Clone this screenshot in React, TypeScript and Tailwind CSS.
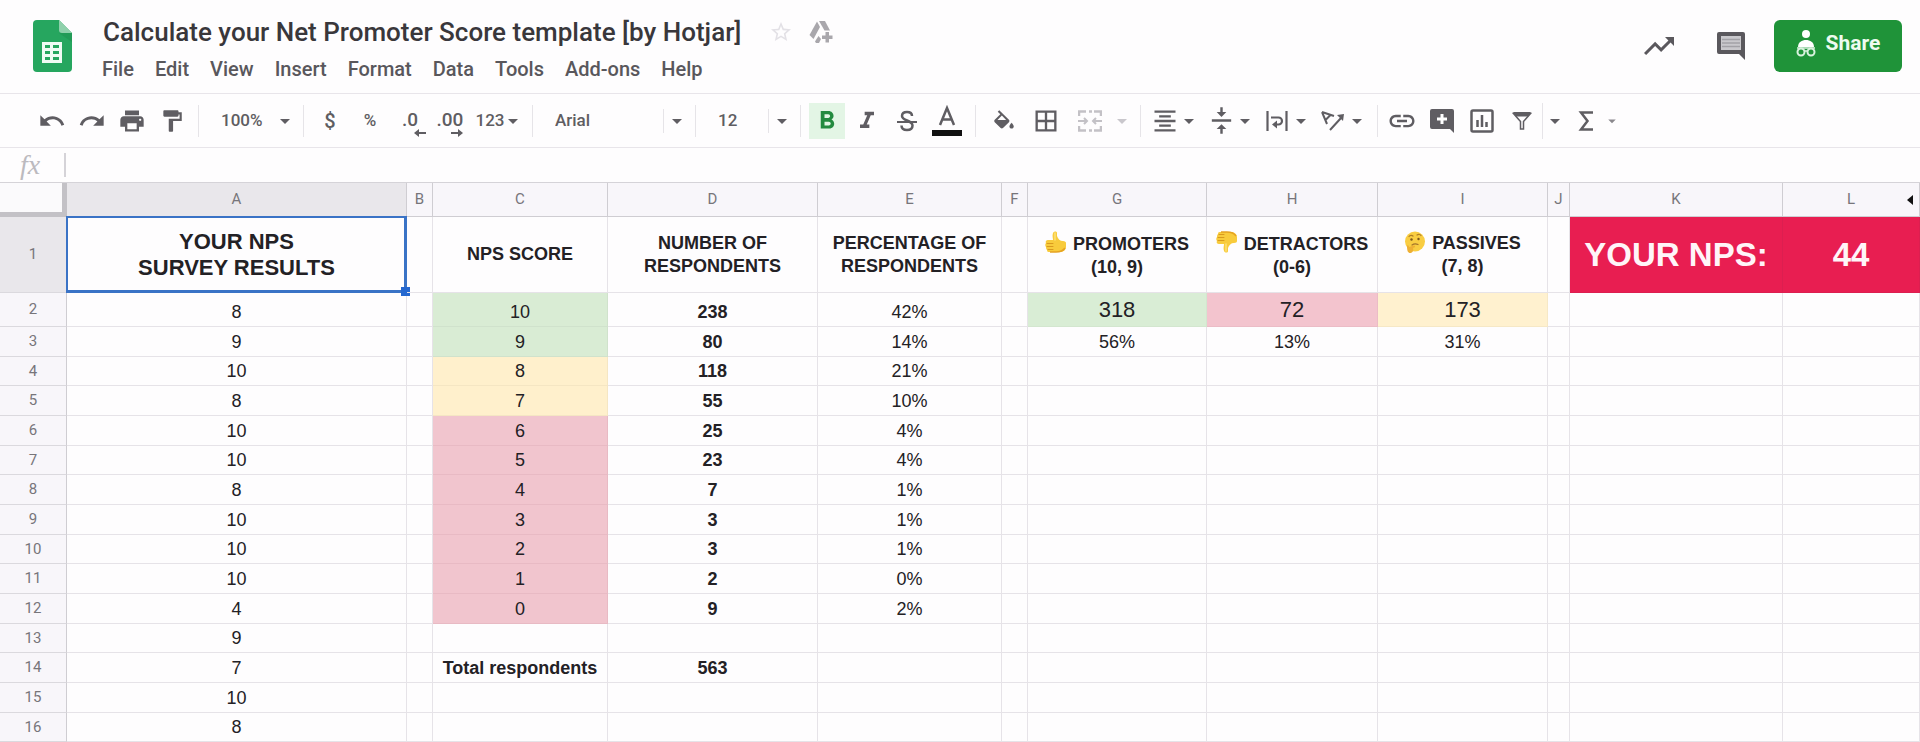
import { useState } from 'react';
import type { ReactNode } from 'react';
import clsx from 'clsx';
import {
  MdArrowDropDown,
  MdBorderAll,
  MdFormatAlignCenter,
  MdFormatBold,
  MdFormatItalic,
  MdFormatPaint,
  MdLink,
  MdPrint,
  MdRedo,
  MdStarBorder,
  MdTrendingUp,
  MdUndo,
  MdVerticalAlignCenter,
} from 'react-icons/md';

const menuItems = ['File', 'Edit', 'View', 'Insert', 'Format', 'Data', 'Tools', 'Add-ons', 'Help'];

const columns = [
  { name: 'A', width: 'w-[340px]' },
  { name: 'B', width: 'w-[26px]' },
  { name: 'C', width: 'w-[175px]' },
  { name: 'D', width: 'w-[210px]' },
  { name: 'E', width: 'w-[184px]' },
  { name: 'F', width: 'w-[26px]' },
  { name: 'G', width: 'w-[179px]' },
  { name: 'H', width: 'w-[171px]' },
  { name: 'I', width: 'w-[170px]' },
  { name: 'J', width: 'w-[22px]' },
  { name: 'K', width: 'w-[213px]' },
  { name: 'L', width: 'w-[137px]' },
];

const surveyResults = [8, 9, 10, 8, 10, 10, 8, 10, 10, 10, 4, 9, 7, 10, 8];

const scores = [
  { score: 10, count: 238, share: '42%' },
  { score: 9, count: 80, share: '14%' },
  { score: 8, count: 118, share: '21%' },
  { score: 7, count: 55, share: '10%' },
  { score: 6, count: 25, share: '4%' },
  { score: 5, count: 23, share: '4%' },
  { score: 4, count: 7, share: '1%' },
  { score: 3, count: 3, share: '1%' },
  { score: 2, count: 3, share: '1%' },
  { score: 1, count: 2, share: '0%' },
  { score: 0, count: 9, share: '2%' },
];

const groups: Record<string, { total: number; share: string; color: string }> = {
  G: { total: 318, share: '56%', color: 'bg-[#d9edd5] border-[#d3e6cf]' },
  H: { total: 72, share: '13%', color: 'bg-[#f3c4ce] border-[#ebbcc6]' },
  I: { total: 173, share: '31%', color: 'bg-[#fff1cf] border-[#f6e8c6]' },
};

const scoreColor = (score: number) => {
  if (score >= 9) return 'bg-[#d9ecd4] border-[#d0e2cc]';
  if (score >= 7) return 'bg-[#fff0cc] border-[#f5e6c3]';
  return 'bg-[#f1c5ce] border-[#e8bac4]';
};

const Caret = ({ className }: { className?: string }) => (
  <MdArrowDropDown size={24} className={clsx('-mx-1 shrink-0', className)} />
);

const Divider = ({ className = 'mx-1.5' }: { className?: string }) => (
  <span className={clsx('h-8 w-px shrink-0 bg-[#e6e4e8]', className)} />
);

const Tool = ({ label, className = 'w-10', children }: { label: string; className?: string; children: ReactNode }) => (
  <button type="button" aria-label={label} className={clsx('flex h-9 shrink-0 items-center justify-center', className)}>
    {children}
  </button>
);

const MenuTool = ({ label, children }: { label: string; children: ReactNode }) => (
  <button type="button" aria-label={label} className="flex h-9 w-14 shrink-0 items-center">
    <span className="flex w-8 justify-center">{children}</span>
    <Caret />
  </button>
);

const Picker = ({ label, value, className, split }: { label: string; value: string; className: string; split?: boolean }) => (
  <div className={clsx('relative h-9 shrink-0', className)}>
    <select
      aria-label={label}
      defaultValue={value}
      className="h-full w-full appearance-none bg-transparent pl-4 text-[17px] font-medium outline-none"
    >
      <option>{value}</option>
    </select>
    <span className="pointer-events-none absolute inset-y-0 right-0 flex items-center">
      {split && <span className="mr-px h-6 w-px bg-[#e6e4e8]" />}
      <MdArrowDropDown size={24} />
    </span>
  </div>
);

const SheetsLogo = () => (
  <svg viewBox="0 0 39 52" className="h-[52px] w-[39px] shrink-0" aria-label="Sheets">
    <path d="M4 0h22l13 13v35a4 4 0 0 1-4 4H4a4 4 0 0 1-4-4V4a4 4 0 0 1 4-4z" fill="#26a65f" />
    <path d="M26 0l13 13H29a3 3 0 0 1-3-3z" fill="#8fd0ab" />
    <path d="M26 13h13v9z" fill="#1e8f50" opacity=".5" />
    <path
      fillRule="evenodd"
      fill="#f0fbf4"
      d="M9 22h20v21H9zM12 25v3h5v-3zM20 25v3h6v-3zM12 31v3h5v-3zM20 31v3h6v-3zM12 37v3h5v-3zM20 37v3h6v-3z"
    />
  </svg>
);

const DriveIcon = () => (
  <svg viewBox="0 0 24 24" className="size-6" fill="currentColor">
    <path d="M8 1.500l3 5.500-6.500 12L0.500 15z" />
    <path d="M10 1h6l5 9.500h-5.500z" />
    <path d="M9.500 16l2.500 3-2 4H7l-1-1.500z" />
    <path d="M16.500 12h3.500v3.500h3.500V19H20v3.500h-3.500V19H13v-3.500h3.500z" />
  </svg>
);

const CommentIcon = () => (
  <svg viewBox="0 0 30 30" className="size-[30px]">
    <path d="M3 1h24a2 2 0 0 1 2 2v26l-6-6H3a2 2 0 0 1-2-2V3a2 2 0 0 1 2-2z" fill="#5a585d" />
    <path d="M5 5h20v14H5z" fill="#c9c8cc" />
    <path d="M6 8.500h18M6 12h18M6 15.500h18" stroke="#a2a1a6" strokeWidth="1.500" />
  </svg>
);

const ShareIcon = () => (
  <svg viewBox="0 0 20 28" className="h-7 w-5" fill="none">
    <circle cx="10" cy="4" r="4" fill="#fff" />
    <path d="M2 17c0-5 4-7 8-7s8 2 8 7z" fill="#fff" />
    <circle cx="5" cy="22" r="3.500" stroke="#d9f2de" strokeWidth="2" />
    <circle cx="15" cy="22" r="3.500" stroke="#d9f2de" strokeWidth="2" />
    <path d="M1 18h18M8 21h4" stroke="#d9f2de" strokeWidth="1.500" />
  </svg>
);

const ThumbIcon = ({ down }: { down?: boolean }) => (
  <svg viewBox="0 0 22 22" className={clsx('mr-1.5 inline-block size-[22px] align-[-3px]', down ? 'rotate-180' : '-scale-x-100')}>
    <path
      d="M1 12c0-1 1-2 3-2 3 0 5-2 6-5V2c0-2 3-2 4 0 1 3 0 5 0 7h5c2 0 3 2 2 3 1 1 1 3 0 4 0 1 0 2-1 3 0 2-1 2-3 2H7c-3 0-6-2-6-5z"
      fill="#f8cb3c"
    />
    <path d="M14 12.500h6M14 15.500h6M14 18.500h5" stroke="#d99a1e" strokeWidth="1" strokeLinecap="round" />
    <path d="M2 17c2 3 5 4 9 4h6" stroke="#e5a322" strokeWidth="1.500" fill="none" />
    <path d="M12 2v7" stroke="#fde17a" strokeWidth="1.500" strokeLinecap="round" />
  </svg>
);

const ThinkingIcon = () => (
  <svg viewBox="0 0 22 22" className="mr-1.5 inline-block size-[22px] align-[-4px]" fill="none">
    <circle cx="11" cy="10.500" r="10" fill="#f9cd42" />
    <path d="M5 5.500c1-1.500 3-1.500 4-.5M13 4c1.500-1 3.500-.5 4 .5" stroke="#b07f26" strokeWidth="1.200" strokeLinecap="round" />
    <circle cx="7.500" cy="8.500" r="1.200" fill="#7d571c" />
    <circle cx="14.500" cy="8" r="1.200" fill="#7d571c" />
    <path d="M8 14c2-1.500 4-1.500 6-.5" stroke="#a5742a" strokeWidth="1.200" strokeLinecap="round" />
    <path d="M3 15c0-1 2-1 2 1l5-1.500c1.500 0 1.500 2 0 2L9 17c1 3-1 5-3 5s-3-2-3-7z" fill="#eeb033" />
  </svg>
);

const Header = () => (
  <header className="flex h-[94px] shrink-0 items-start border-b border-[#e8e5ea] pr-[18px] pl-[33px]">
    <a href="#home" className="mt-5 shrink-0">
      <SheetsLogo />
    </a>
    <div className="ml-6">
      <div className="mt-4 flex h-8 items-center pl-[7px]">
        <h1 className="text-[26px] leading-8 font-medium whitespace-nowrap text-[#39373b]">
          Calculate your Net Promoter Score template [by Hotjar]
        </h1>
        <button type="button" aria-label="Star" className="ml-7 text-[#e3e1e6]">
          <MdStarBorder size={24} />
        </button>
        <button type="button" aria-label="Add to Drive" className="ml-4 text-[#a9a7ac]">
          <DriveIcon />
        </button>
      </div>
      <nav className="mt-[7px] flex gap-[21px] pl-1.5">
        {menuItems.map((item) => (
          <button key={item} type="button" className="text-[20px] leading-7 font-medium text-[#59575c]">
            {item}
          </button>
        ))}
      </nav>
    </div>
    <div className="mt-5 ml-auto flex items-center">
      <button type="button" aria-label="Activity" className="text-[#5a585d]">
        <MdTrendingUp size={36} />
      </button>
      <button type="button" aria-label="Comments" className="ml-[39px]">
        <CommentIcon />
      </button>
      <button
        type="button"
        className="ml-7 flex h-[52px] w-32 items-center justify-center gap-2.5 rounded-md bg-[#1f9339] pb-1 text-[21px] font-bold text-[#eefbf0]"
      >
        <ShareIcon />
        Share
      </button>
    </div>
  </header>
);

const Toolbar = () => (
  <div className="flex h-[54px] shrink-0 items-center border-b border-[#e8e5ea] pl-8 text-[17px] font-medium text-[#5f5d62]">
    <Tool label="Undo"><MdUndo size={28} /></Tool>
    <Tool label="Redo"><MdRedo size={28} /></Tool>
    <Tool label="Print"><MdPrint size={28} /></Tool>
    <Tool label="Paint format"><MdFormatPaint size={26} /></Tool>
    <Divider />
    <Picker label="Zoom" value="100%" className="w-[92px]" />
    <Divider />
    <Tool label="Format as currency"><span className="text-[20px]">$</span></Tool>
    <Tool label="Format as percent">%</Tool>
    <Tool label="Decrease decimal places">
      <span className="relative text-[19px]">
        .0
        <svg viewBox="0 0 12 8" className="absolute -right-2 -bottom-0.5 h-2 w-3" fill="currentColor">
          <path d="M0 4l5-4v3h7v2H5v3z" />
        </svg>
      </span>
    </Tool>
    <Tool label="Increase decimal places">
      <span className="relative text-[19px]">
        .00
        <svg viewBox="0 0 12 8" className="absolute right-0 -bottom-0.5 h-2 w-3" fill="currentColor">
          <path d="M12 4L7 0v3H0v2h7v3z" />
        </svg>
      </span>
    </Tool>
    <Tool label="More formats" className="w-14">
      123
      <Caret />
    </Tool>
    <Divider />
    <Picker label="Font" value="Arial" className="w-[150px]" split />
    <Divider />
    <Picker label="Font size" value="12" className="w-[92px]" split />
    <Divider />
    <Tool label="Bold">
      <span className="flex size-9 items-center justify-center bg-[#e3f5e5] text-[#238a3f]">
        <MdFormatBold size={30} />
      </span>
    </Tool>
    <Tool label="Italic"><MdFormatItalic size={28} /></Tool>
    <Tool label="Strikethrough">
      <svg viewBox="0 0 20 22" className="h-[22px] w-5" fill="none" stroke="currentColor" strokeWidth="2.500">
        <path d="M15 6c0-2.500-2-4-5-4S5 3.500 5 6c0 5 10.500 4 10.500 9.500 0 3-2.500 4.500-5.500 4.500s-5.500-1.500-5.500-4.500" />
        <path d="M0 12h20" strokeWidth="2" />
      </svg>
    </Tool>
    <Tool label="Text color">
      <svg viewBox="0 0 32 32" className="size-8" fill="none">
        <path d="M9 20l7-17 7 17M11.500 14.500h9" stroke="currentColor" strokeWidth="2.500" />
        <path d="M1 25h30v6H1z" fill="#111" />
      </svg>
    </Tool>
    <Divider className="mx-2" />
    <Tool label="Fill color">
      <svg viewBox="0 0 24 20" className="h-[22px] w-[26px]" fill="currentColor">
        <path d="M16.560 8.940L7.620 0 6.210 1.410l2.380 2.380-5.150 5.150c-.59.590-.59 1.540 0 2.120l5.500 5.500c.290.290.680.440 1.060.440s.770-.15 1.060-.44l5.500-5.500c.590-.58.590-1.530 0-2.120zM6 9l4-4 4 4z" fillRule="evenodd" />
        <path d="M19 11.500s-2 2.170-2 3.500c0 1.100.9 2 2 2s2-.9 2-2c0-1.330-2-3.500-2-3.500z" />
      </svg>
    </Tool>
    <Tool label="Borders" className="w-11"><MdBorderAll size={28} /></Tool>
    <Tool label="Merge cells" className="w-11 text-[#c3c1c6]">
      <svg viewBox="0 0 24 22" className="h-[22px] w-6" fill="none" stroke="currentColor" strokeWidth="2.500">
        <path d="M1 6V1.500h7M11 1.500h3M16 1.500h7V6M1 16v4.500h7M11 20.500h3M16 20.500h7V16" />
        <path d="M0 11h8M24 11h-8M6 8l3 3-3 3M18 8l-3 3 3 3" strokeWidth="2" />
      </svg>
    </Tool>
    <Tool label="Merge type" className="w-5 text-[#c9c7cc]"><Caret /></Tool>
    <Divider className="mx-2" />
    <MenuTool label="Horizontal align"><MdFormatAlignCenter size={28} /></MenuTool>
    <MenuTool label="Vertical align"><MdVerticalAlignCenter size={29} /></MenuTool>
    <MenuTool label="Text wrapping">
      <svg viewBox="0 0 22 22" className="size-[22px]" fill="none" stroke="currentColor" strokeWidth="2.500">
        <path d="M1.500 1v20M20.500 1v20M5 7.500h7.500a3.500 3.500 0 0 1 0 7H9" strokeWidth="2.200" />
        <path d="M11 10.500v8l-5-4z" fill="currentColor" stroke="none" />
      </svg>
    </MenuTool>
    <MenuTool label="Text rotation">
      <svg viewBox="0 0 26 22" className="h-[22px] w-[26px]" fill="none" stroke="currentColor" strokeWidth="2">
        <path d="M2 2l12 4M2 2l5 12M11 4.500L5.500 10M10 20L21 8" />
        <path d="M17 5l7-1-1 7z" fill="currentColor" stroke="none" />
      </svg>
    </MenuTool>
    <Divider className="mx-1" />
    <Tool label="Insert link"><MdLink size={30} /></Tool>
    <Tool label="Insert comment">
      <svg viewBox="0 0 24 24" className="size-6">
        <path d="M2 0h20a2 2 0 0 1 2 2v22l-4-4H2a2 2 0 0 1-2-2V2a2 2 0 0 1 2-2z" fill="currentColor" />
        <path d="M12 5v10M7 10h10" stroke="#fff" strokeWidth="3" />
      </svg>
    </Tool>
    <Tool label="Insert chart">
      <svg viewBox="0 0 24 24" className="size-6" fill="none" stroke="currentColor" strokeWidth="2.500">
        <rect x="1.500" y="1.500" width="21" height="21" rx="1.500" />
        <path d="M7.500 11v7M12 6v12M16.500 13v5" />
      </svg>
    </Tool>
    <Tool label="Create a filter">
      <svg viewBox="0 0 20 18" className="h-[18px] w-5" fill="none">
        <path d="M1.500 1.500h17L11.500 9.500V17H8.500V9.500z" stroke="currentColor" strokeWidth="1.500" />
        <path d="M1 0h18l-3 4.500H4z" fill="currentColor" />
      </svg>
    </Tool>
    <Tool label="Filter views" className="w-6 border-l border-[#e6e4e8]"><Caret /></Tool>
    <Tool label="Functions">
      <svg viewBox="0 0 16 20" className="h-5 w-4" fill="none" stroke="currentColor" strokeWidth="2.500">
        <path d="M15 1.500H3L9.500 10 3 18.500h12" />
      </svg>
    </Tool>
    <Tool label="More functions" className="w-3 text-[#8a888d]"><MdArrowDropDown size={18} className="shrink-0" /></Tool>
  </div>
);

const FormulaBar = () => (
  <div className="flex h-[35px] shrink-0 items-center border-b border-[#d5d3d8] pl-5">
    <label htmlFor="formula" className="w-11 font-['Liberation_Serif',serif] text-[28px] leading-7 text-[#bcbabf] italic">
      fx
    </label>
    <input id="formula" type="text" className="h-6 flex-1 border-l-2 border-[#d5d3d8] bg-transparent px-2 text-[18px] outline-none" />
  </div>
);

const headings: Record<string, ReactNode> = {
  C: 'NPS SCORE',
  D: <>NUMBER OF<br />RESPONDENTS</>,
  E: <>PERCENTAGE OF<br />RESPONDENTS</>,
  G: <><ThumbIcon />PROMOTERS<br />(10, 9)</>,
  H: <><ThumbIcon down />DETRACTORS<br />(0-6)</>,
  I: <><ThinkingIcon />PASSIVES<br />(7, 8)</>,
};

const cellBase = 'border-r border-b p-0 text-center whitespace-nowrap';
const rowHead = 'border-r border-b border-[#dbd9de] border-r-[#cfcdd2] p-0 text-center font-[Roboto,sans-serif] text-[15px] font-normal text-[#77757a]';

const HeadingRow = ({ selected, onSelect }: { selected: string; onSelect: (column: string) => void }) => (
  <tr className="h-[76px]">
    <th scope="row" className={clsx(rowHead, 'bg-[#e9e7eb]')}>1</th>
    {columns.map(({ name }) => {
      const isScore = name === 'K' || name === 'L';
      return (
        <td
          key={name}
          onClick={() => onSelect(name)}
          className={clsx(
            cellBase,
            'relative align-middle font-bold',
            isScore ? 'border-[#dc1f50] bg-[#e81e51] text-[33px] text-[#fff5f8]' : 'border-[#e6e3e8]',
            name === 'A' ? 'text-[22px] leading-[26px]' : !isScore && 'text-[18px] leading-[23px]',
          )}
        >
          {name === 'A' && <>YOUR NPS<br />SURVEY RESULTS</>}
          {name === 'K' && 'YOUR NPS:'}
          {name === 'L' && '44'}
          {headings[name]}
          {selected === name && (
            <span className="pointer-events-none absolute -inset-px border-[3px] border-t-2 border-l-2 border-[#3a73c6]">
              <span className="absolute -right-1.5 -bottom-1.5 size-[9px] bg-[#2467cf]" />
            </span>
          )}
        </td>
      );
    })}
  </tr>
);

const DataRow = ({ number }: { number: number }) => {
  const row = scores[number - 2];

  const renderCell = (name: string) => {
    const group = groups[name];
    if (name === 'A') return surveyResults[number - 2];
    if (name === 'C') return number === 14 ? 'Total respondents' : row?.score;
    if (name === 'D') return number === 14 ? 563 : row?.count;
    if (name === 'E') return row?.share;
    if (group && number === 2) return group.total;
    if (group && number === 3) return group.share;
    return null;
  };

  const cellColor = (name: string) => {
    if (name === 'C' && row) return scoreColor(row.score);
    if (groups[name] && number === 2) return groups[name].color;
    return 'border-[#e6e3e8]';
  };

  return (
    <tr className={number === 2 ? 'h-[34px]' : number % 3 === 1 ? 'h-[29px]' : 'h-[30px]'}>
      <th scope="row" className={clsx(rowHead, 'bg-[#f8f6fa]')}>{number}</th>
      {columns.map(({ name }) => (
        <td
          key={name}
          className={clsx(
            cellBase,
            cellColor(name),
            groups[name] && number === 2 ? 'align-middle text-[22px] leading-7' : 'align-bottom text-[18px] leading-7',
            (name === 'D' || (name === 'C' && number === 14)) && 'font-bold',
          )}
        >
          {renderCell(name)}
        </td>
      ))}
    </tr>
  );
};

const Sheet = () => {
  const [selected, setSelected] = useState('A');

  return (
    <main className="min-h-0 flex-1 overflow-hidden">
      <table className="w-full table-fixed border-separate border-spacing-0 font-['Liberation_Sans',Arial,sans-serif] text-[#232125]">
        <colgroup>
          <col className="w-[67px]" />
          {columns.map(({ name, width }) => (
            <col key={name} className={width} />
          ))}
        </colgroup>
        <thead>
          <tr className="h-[34px]">
            <td className="border-r-[5px] border-b-[5px] border-[#c3c1c6] bg-[#fbfafc] p-0" />
            {columns.map(({ name }) => (
              <th
                key={name}
                scope="col"
                className={clsx(
                  'relative border-r border-b border-[#cfcdd2] p-0 text-center font-[Roboto,sans-serif] text-[15px] font-normal text-[#77757a]',
                  name === selected ? 'bg-[#e9e7eb]' : 'bg-[#f8f6fa]',
                )}
              >
                {name}
                {name === 'L' && (
                  <svg viewBox="0 0 6 10" className="absolute top-3 right-1.5 h-2.5 w-1.5">
                    <path d="M6 0v10L0 5z" fill="#111" />
                  </svg>
                )}
              </th>
            ))}
          </tr>
        </thead>
        <tbody>
          <HeadingRow selected={selected} onSelect={setSelected} />
          {surveyResults.map((_, i) => (
            <DataRow key={i} number={i + 2} />
          ))}
        </tbody>
      </table>
    </main>
  );
};

const App = () => (
  <div className="flex h-screen flex-col overflow-hidden bg-[#fefdfe] font-[Roboto,sans-serif]">
    <Header />
    <Toolbar />
    <FormulaBar />
    <Sheet />
  </div>
);

export default App;
